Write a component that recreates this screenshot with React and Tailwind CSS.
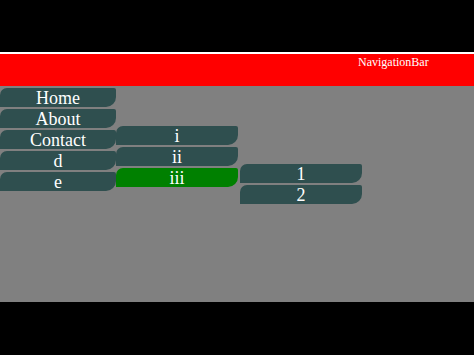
import React from 'react';

const serif = { fontFamily: '"Liberation Serif", "Times New Roman", serif' };

const MenuButton = ({ label, active = false, width = 'w-[116px]' }) => (
  <div
    className={`${width} h-[19px] leading-[21px] text-center text-white text-[18px] rounded-tl-[7px] rounded-tr-[2px] rounded-br-[10px] overflow-visible ${active ? 'bg-[#008000]' : 'bg-[#2f4f4f]'}`}
  >
    {label}
  </div>
);

export default function App() {
  return (
    <div className="w-[474px] h-[355px] bg-black flex flex-col overflow-hidden" style={serif}>
      {/* top black area */}
      <div className="h-[52px] shrink-0 bg-black" />
      <div className="h-[2px] shrink-0 bg-white" />

      {/* Navigation bar */}
      <div className="h-[32px] shrink-0 bg-[#ff0000] pl-[358px] text-white text-[12px] leading-[13px] pt-[2px]">
        NavigationBar
      </div>

      {/* Content */}
      <div className="h-[216px] shrink-0 bg-[#808080] pt-[2px]">
        <div className="relative w-[116px] flex flex-col gap-[2px]">
          <MenuButton label="Home" />
          <MenuButton label="About" />
          <div className="relative">
            <MenuButton label="Contact" />
            {/* level 2 */}
            <div className="absolute left-[116px] top-[-4px] flex flex-col gap-[2px]">
              <MenuButton label="i" width="w-[122px]" />
              <MenuButton label="ii" width="w-[122px]" />
              <div className="relative">
                <MenuButton label="iii" width="w-[122px]" active />
                {/* level 3 */}
                <div className="absolute left-[124px] top-[-4px] flex flex-col gap-[2px]">
                  <MenuButton label="1" width="w-[122px]" />
                  <MenuButton label="2" width="w-[122px]" />
                </div>
              </div>
            </div>
          </div>
          <MenuButton label="d" />
          <MenuButton label="e" />
        </div>
      </div>

      {/* bottom black area */}
      <div className="flex-1 bg-black" />
    </div>
  );
}
